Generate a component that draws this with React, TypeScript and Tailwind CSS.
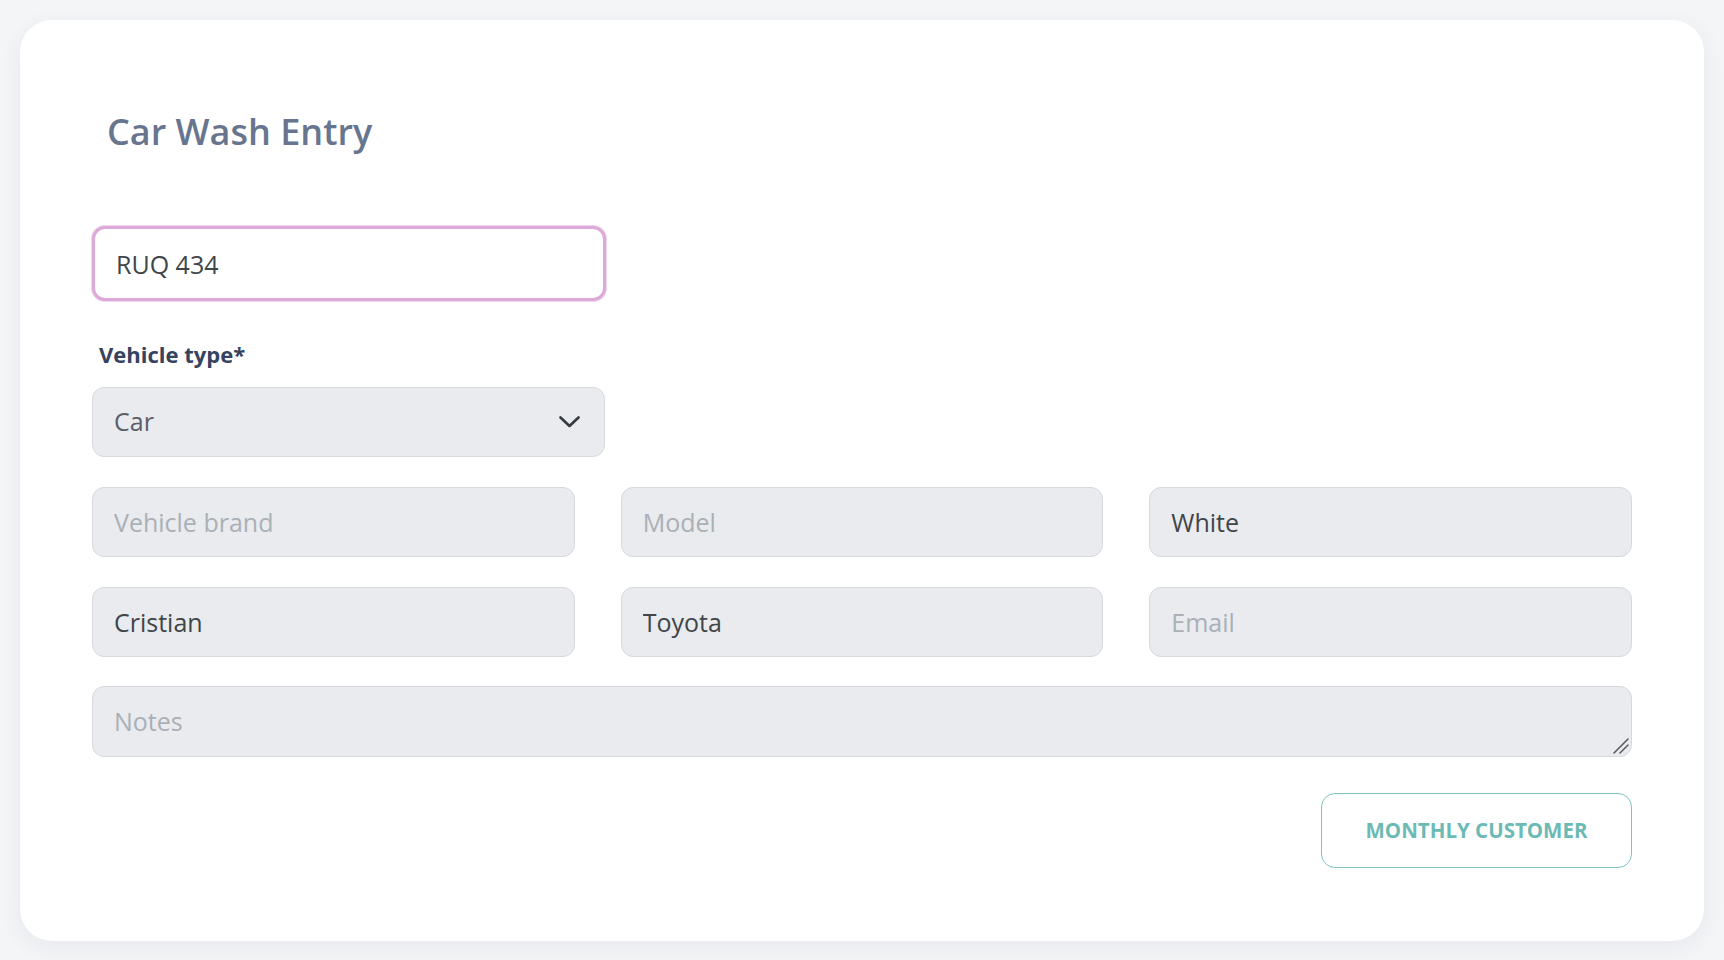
const FONT = "font-['Open_Sans','Noto_Sans',sans-serif]";

const FIELD =
  "h-[70px] w-full rounded-[12px] border border-[#d6d9dd] bg-[#e9ebee] px-[21px] text-[25px] text-[#404549] outline-none placeholder:text-[#aab0b7]";

function Chevron() {
  return (
    <svg width="21" height="12" viewBox="0 0 21 12" fill="none">
      <path
        d="M1.5 1.5L10.5 10L19.5 1.5"
        stroke="#343a42"
        strokeWidth="2.6"
        strokeLinecap="round"
        strokeLinejoin="round"
      />
    </svg>
  );
}

function ResizeGrip() {
  return (
    <svg
      width="18"
      height="18"
      viewBox="0 0 18 18"
      className="pointer-events-none absolute right-[2px] bottom-[2px]"
    >
      <path d="M2 16L16 2M8 16L16 8" stroke="#5a5e64" strokeWidth="1.6" strokeLinecap="round" />
    </svg>
  );
}

export default function App() {
  return (
    <div className={`min-h-screen bg-[#f4f5f7] p-[20px] ${FONT}`}>
      <div className="rounded-[32px] bg-white px-[72px] pt-[91px] pb-[73px] shadow-[0_6px_24px_rgba(30,40,60,0.06)]">
        <h1 className="pl-[15px] text-[36px] leading-[42px] font-semibold text-[#68758f]">
          Car Wash Entry
        </h1>

        <div className="mt-[73px]">
          <input
            defaultValue="RUQ 434"
            className="h-[75px] w-[514px] rounded-[13px] border-[3px] border-[#dca9d8] bg-white px-[21px] text-[25px] text-[#404549] shadow-[0_0_0_1px_#eed6ec] outline-none"
          />
        </div>

        <label className="mt-[39px] block pl-[7px] text-[22px] leading-[28px] font-bold text-[#35435f]">
          Vehicle type*
        </label>

        <div className="mt-[19px] flex h-[70px] w-[513px] items-center justify-between rounded-[12px] border border-[#d6d9dd] bg-[#e9ebee] pr-[24px] pl-[21px]">
          <span className="text-[25px] text-[#5b6068]">Car</span>
          <Chevron />
        </div>

        <div className="mt-[30px] grid grid-cols-3 gap-x-[46px] gap-y-[30px]">
          <input placeholder="Vehicle brand" className={FIELD} />
          <input placeholder="Model" className={FIELD} />
          <input defaultValue="White" className={FIELD} />
          <input defaultValue="Cristian" className={FIELD} />
          <input defaultValue="Toyota" className={FIELD} />
          <input placeholder="Email" className={FIELD} />
        </div>

        <div className="relative mt-[29px]">
          <textarea
            placeholder="Notes"
            rows={1}
            className="block h-[71px] w-full resize-none rounded-[12px] border border-[#d6d9dd] bg-[#e9ebee] px-[21px] py-[16px] text-[25px] leading-[37px] text-[#404549] outline-none placeholder:text-[#aab0b7]"
          />
          <ResizeGrip />
        </div>

        <div className="mt-[36px] flex justify-end">
          <button className="h-[75px] w-[311px] rounded-[14px] border border-[#7fc1be] bg-white text-[20.5px] font-bold text-[#6bbab4] uppercase">
            Monthly Customer
          </button>
        </div>
      </div>
    </div>
  );
}
